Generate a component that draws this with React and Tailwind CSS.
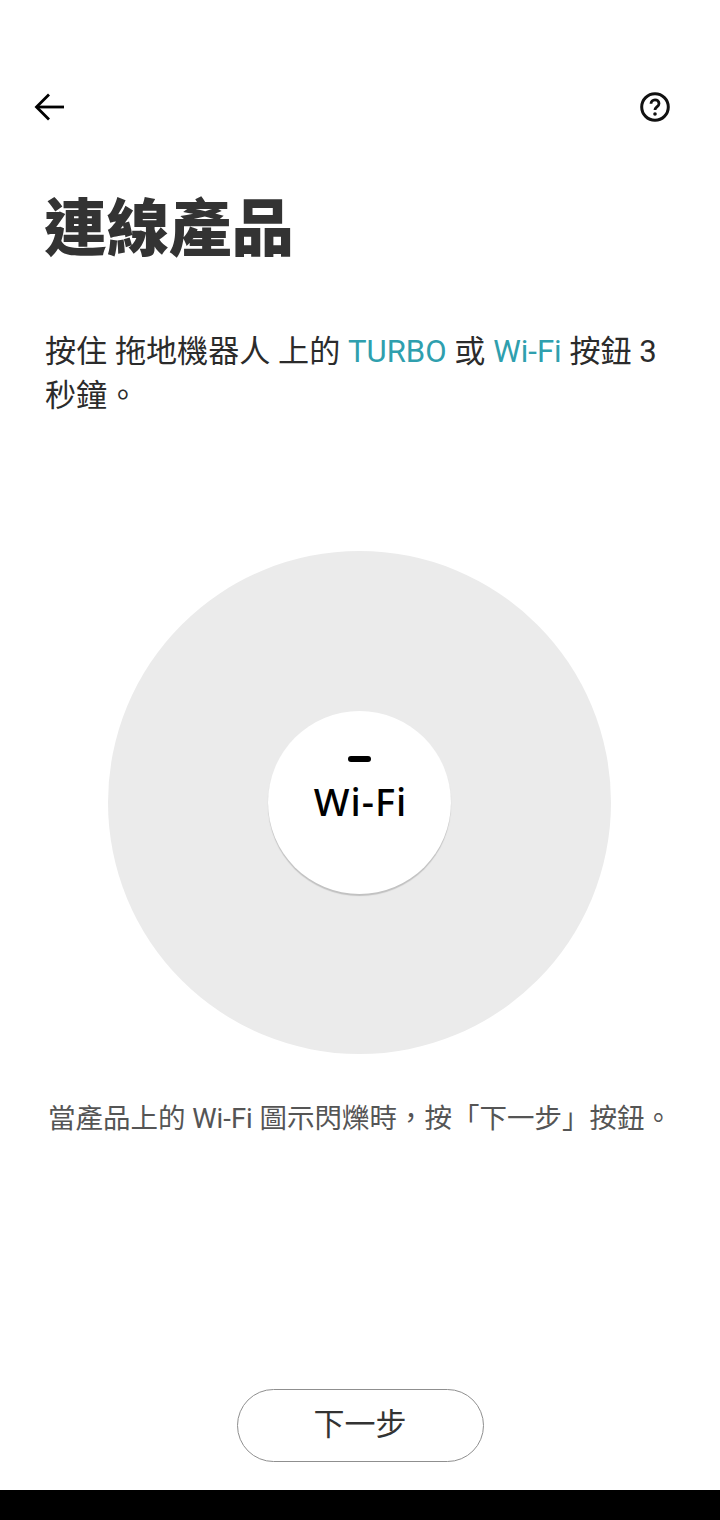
const cjk = { fontFamily: 'Roboto, "Noto Sans CJK TC", "Noto Sans", sans-serif' };

function BackIcon() {
  return (
    <svg width="32" height="32" viewBox="0 0 32 32" fill="none" stroke="#000" strokeWidth="2.8">
      <path d="M30 16H3" />
      <path d="M15 3.5 2.5 16 15 28.5" />
    </svg>
  );
}

function HelpIcon() {
  return (
    <svg width="30" height="30" viewBox="0 0 30 30" fill="none" stroke="#111" strokeWidth="3">
      <circle cx="15" cy="15" r="13.3" />
      <path d="M11 11.8c0-2.4 1.7-4 4-4s4 1.5 4 3.6c0 3.4-4 3.6-4 6.6" strokeWidth="2.8" />
      <circle cx="15" cy="22" r="1.8" fill="#111" stroke="none" />
    </svg>
  );
}

export default function App() {
  return (
    <div className="flex flex-col h-[1520px] w-[720px] bg-white overflow-hidden" style={cjk}>
      {/* Header */}
      <div className="flex justify-between items-center h-[32px] mt-[91px] pl-[34px] pr-[50px]">
        <BackIcon />
        <HelpIcon />
      </div>

      <h1 className="mt-[69px] pl-[44px] text-[62.5px] leading-[76px] font-black text-[#333333]">
        連線產品
      </h1>

      <p className="mt-[62px] pl-[45px] pr-[40px] text-[31.1px] leading-[44px] text-[#2b2b2b]">
        按住 拖地機器人 上的 <span className="text-[#2f9fae]">TURBO</span> 或{" "}
        <span className="text-[#2f9fae]">Wi-Fi</span> 按鈕 3 秒鐘。
      </p>

      {/* Product diagram */}
      <div className="flex justify-center mt-[133px] pr-[1px]">
        <div className="flex items-center justify-center w-[503px] h-[503px] rounded-full bg-[#ebebeb]">
          <div className="flex flex-col items-center w-[183px] h-[183px] rounded-full bg-white shadow-[0_2px_1px_rgba(0,0,0,0.18)]">
            <div className="w-[23px] h-[6px] mt-[45px] rounded-full bg-black" />
            <span className="mt-[14px] pl-[2px] text-[38px] leading-[50px] tracking-[1px] font-medium text-black" style={{ fontFamily: '"Noto Sans", sans-serif' }}>
              Wi-Fi
            </span>
          </div>
        </div>
      </div>

      <p className="mt-[45px] text-center text-[27.5px] leading-[40px] text-[#555555] whitespace-nowrap">
        當產品上的 Wi-Fi 圖示閃爍時，按「下一步」按鈕。
      </p>

      {/* Next button */}
      <div className="flex justify-center mt-auto mb-[28px]">
        <button className="w-[247px] h-[73px] pb-[1px] rounded-full border-[1.5px] border-[#8f8f8f] text-[31px] text-[#333333]">
          下一步
        </button>
      </div>
      <div className="h-[30px] bg-black" />
    </div>
  );
}
